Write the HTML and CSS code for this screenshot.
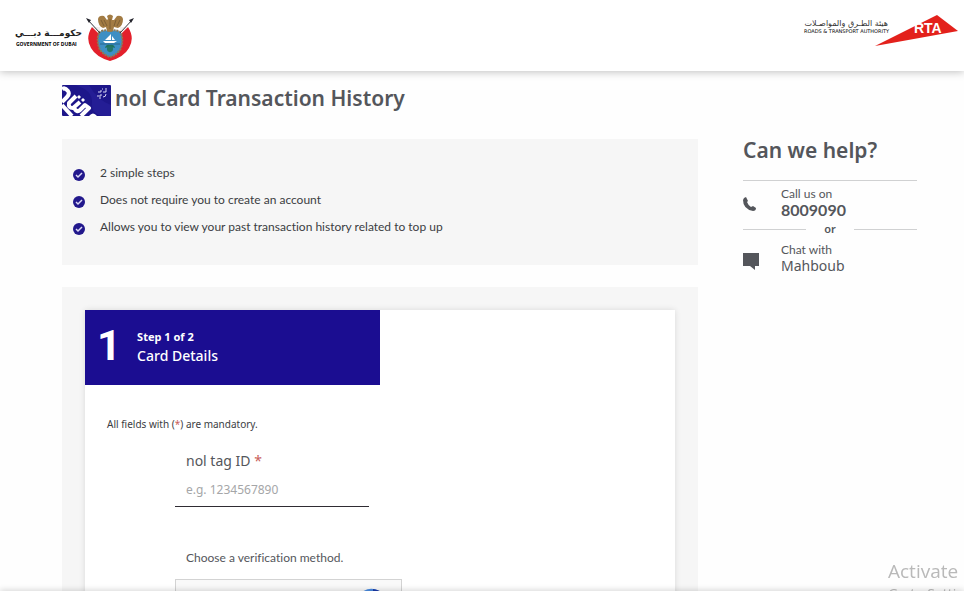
FILE: index.html
```html
<!DOCTYPE html>
<html lang="en">
<head>
    <meta charset="UTF-8">
    <meta name="viewport" content="width=device-width, initial-scale=1.0">
    <title>nol Card Transaction History</title>
    <link rel="stylesheet" href="styles.css">
</head>
<body>
    <header class="header">
        <a href="#" class="logo gov-logo">
            <span class="logo-text gov-text">
                <span class="gov-ar" lang="ar" dir="rtl">حكومـــة دبـــي</span>
                <span class="gov-en">GOVERNMENT OF DUBAI</span>
            </span>
            <svg class="emblem" width="48" height="48" viewBox="0 0 48 48" aria-hidden="true">
                <path d="M6 13 Q10 14 14 18 L35 18 Q38 14 42 13 Q49 24 43 34 Q38 43 24 47 Q10 43 5 34 Q-1 24 6 13z" fill="#e3202b"/>
                <path d="M6 13 L14 13 L14 21z M42 13 L34 13 L34 21z" fill="#f4f1ef"/>
                <path d="M13 19 Q16 15 24 17 Q32 15 35 19 Q38 28 34 36 Q29 42 24 43 Q18 41 14 36 Q10 27 13 19z" fill="#3d8fc4" stroke="#8c7b58" stroke-width="2" stroke-dasharray="2 1"/>
                <path d="M12 5 Q13 1 18 2 L21 6 L22 5 L21 2 Q24 -1 27 2 L26 6 L28 6 L31 2 Q36 1 37 5 Q37 12 32 14 L28 13 L27 17 L24 18 L21 17 L20 13 L17 14 Q12 12 12 5z" fill="#a27b43"/>
                <path d="M15 6 L18 12 M18 6 L21 12 M34 6 L31 12 M30 6 L28 12 M24 5 V15" stroke="#7d5f35" fill="none"/>
                <path d="M1 5 L14 19 M47 5 L34 19" stroke="#34353d"/>
                <path d="M0 4 L5 6 L3 9z M48 4 L43 6 L45 9z" fill="#24242c"/>
                <path d="M19 26 L25 20 L25 26z M26 22 L29 26 L26 26z M17 27 H31 L28 29 H19z" fill="#fff"/>
                <path d="M14 30 H34" stroke="#26668f"/>
                <path d="M24 31 Q20 30 19 34 Q23 32 24 39 Q25 32 29 34 Q28 30 24 31z" fill="#20735c"/>
                <circle cx="24" cy="35" r="3" fill="#24776a"/>
            </svg>
        </a>
        <a href="#" class="logo rta-logo">
            <span class="logo-text rta-text">
                <span class="rta-ar" lang="ar" dir="rtl">هيئة الطـرق والمواصـلات</span>
                <span class="rta-en">ROADS &amp; TRANSPORT AUTHORITY</span>
            </span>
            <svg class="rta-mark" width="83" height="32" viewBox="0 0 83 32" aria-label="RTA">
                <path d="M0 32 L62 1 L83 17z" fill="#e3211c"/>
                <text x="39" y="19" class="rta-name">RTA</text>
            </svg>
        </a>
    </header>

    <main class="page">
        <h1 class="title">
            <svg class="nol-card" width="49" height="31" viewBox="0 0 49 31" aria-hidden="true">
                <rect width="49" height="31" rx="1" fill="#1d168a"/>
                <path d="M13 0 Q31 5 30 18 T45 31 H49 V20 Q35 15 27 0z" fill="#241d95"/>
                <g fill="none" stroke="#fff" stroke-width="4" stroke-linejoin="round">
                    <path d="M0 4 Q3 2 6 6 Q8 9 5 12 L0 17"/>
                    <path d="M14 11 L7 18 Q6 23 11 23 L18 17"/>
                    <path d="M0 20 L10 31"/>
                    <path d="M12 23 Q15 28 18 25 L23 20 L27 23 L19 31"/>
                </g>
                <path d="M17 10 l2 2 l-2 2 l-2 -2z M21 13 l2 2 l-2 2 l-2 -2z M27 31 q4 -5 8 0z" fill="#fff"/>
                <path d="M36 7 h3 v-2 M41 7 h3 v-4 M35 11 h4 v-2 M41 12 q3 0 3 -3 M37 13 h2 M40 4 h1" stroke="#d7d5f3" fill="none"/>
            </svg>
            nol Card Transaction History
        </h1>

        <div class="columns">
            <div class="content">
                <ul class="benefits">
                    <li>
                        <svg class="check" width="12" height="12" viewBox="0 0 12 12" aria-hidden="true"><circle cx="6" cy="6" r="6"/><path d="M3 6 L5 8 L9 4"/></svg>
                        2 simple steps
                    </li>
                    <li>
                        <svg class="check" width="12" height="12" viewBox="0 0 12 12" aria-hidden="true"><circle cx="6" cy="6" r="6"/><path d="M3 6 L5 8 L9 4"/></svg>
                        Does not require you to create an account
                    </li>
                    <li>
                        <svg class="check" width="12" height="12" viewBox="0 0 12 12" aria-hidden="true"><circle cx="6" cy="6" r="6"/><path d="M3 6 L5 8 L9 4"/></svg>
                        Allows you to view your past transaction history related to top up
                    </li>
                </ul>

                <section class="form-wrap">
                    <form class="form-card">
                        <div class="step">
                            <span class="step-number">1</span>
                            <div>
                                <p class="step-count">Step 1 of 2</p>
                                <h2 class="step-name">Card Details</h2>
                            </div>
                        </div>
                        <p class="mandatory">All fields with (<span class="required">*</span>) are mandatory.</p>
                        <div class="fields">
                            <label class="tag-label" for="tagId">nol tag ID <span class="required">*</span></label>
                            <input class="tag-input" type="text" id="tagId" placeholder="e.g. 1234567890">
                            <p class="verify">Choose a verification method.</p>
                            <div class="captcha">
                                <svg width="32" height="32" viewBox="0 0 32 32" aria-hidden="true">
                                    <path d="M5 4 Q15 -3 25 5 L20 10 Q16 6 11 8z" fill="#4a8ce2"/>
                                    <path d="M16 1 Q25 2 29 9 V3 V16 H18 L22 11 Q20 8 16 7z" fill="#1c3aa9"/>
                                </svg>
                            </div>
                        </div>
                    </form>
                </section>
            </div>

            <aside class="help">
                <h2 class="help-title">Can we help?</h2>
                <a href="tel:8009090" class="contact">
                    <span class="contact-icon">
                        <svg width="14" height="14" viewBox="0 0 14 14" aria-hidden="true"><path d="M1 1 L3 0 L5 4 L4 5 Q5 8 8 10 L10 9 L13 11 Q13 14 10 14 Q0 12 0 3z"/></svg>
                    </span>
                    <span class="contact-text"><span>Call us on</span><strong class="phone">8009090</strong></span>
                </a>
                <div class="or">or</div>
                <a href="#" class="contact">
                    <span class="contact-icon">
                        <svg width="16" height="17" viewBox="0 0 16 17" aria-hidden="true"><path d="M0 0 H16 V13 H12 V17 L7 13 H0z"/></svg>
                    </span>
                    <span class="contact-text"><span>Chat with</span><span class="agent">Mahboub</span></span>
                </a>
            </aside>
        </div>
    </main>

    <div class="watermark">
        <p class="watermark-title">Activate</p>
        <p class="watermark-text">Go to Setti</p>
    </div>
    <div class="bottom-bar"></div>
</body>
</html>
```

FILE: styles.css
```css
* { margin: 0; padding: 0; box-sizing: border-box; }
body {
    font-family: "Noto Sans", "Open Sans", sans-serif;
    font-size: 12px;
    line-height: 16px;
    font-variant-ligatures: no-common-ligatures;
    color: #3b3d42;
    background: #fefefe;
    height: 100vh;
    overflow: hidden;
}
a { color: inherit; text-decoration: none; }

/* header */
.header {
    display: flex;
    justify-content: space-between;
    align-items: flex-start;
    height: 71px;
    padding: 14px 6px 0 16px;
    background: #fff;
    box-shadow: 0 1px 8px rgba(0,0,0,0.25);
}
.logo { display: flex; }
.logo-text {
    display: flex;
    flex-direction: column;
    white-space: nowrap;
}
.gov-logo { gap: 4px; }
.gov-text {
    width: 66px;
    padding-top: 12px;
    color: #222;
}
.gov-ar {
    font-family: "DejaVu Sans", sans-serif;
    font-size: 9px;
    font-weight: bold;
    line-height: 14px;
}
.gov-en {
    font-family: "Open Sans", sans-serif;
    font-size: 5px;
    font-weight: bold;
    line-height: 8px;
    color: #000;
}
.rta-text {
    width: 84px;
    padding-top: 6px;
    margin-right: -13px;
    color: #333;
}
.rta-ar {
    font-family: "DejaVu Sans", sans-serif;
    font-size: 8px;
    line-height: 8px;
}
.rta-en {
    font-family: "DejaVu Sans", sans-serif;
    font-size: 5px;
    line-height: 6px;
    color: #000;
}
.rta-name {
    font-family: "Liberation Sans", sans-serif;
    font-size: 14px;
    font-weight: bold;
    fill: #fff;
}

/* page */
.page { padding: 14px 47px 0 62px; }
.title {
    display: flex;
    gap: 4px;
    font-size: 21px;
    font-weight: 600;
    line-height: 26px;
    color: #54565b;
}
.columns {
    display: flex;
    gap: 45px;
    padding-top: 23px;
}
.content { flex: 1; }

.benefits {
    display: flex;
    flex-direction: column;
    gap: 11px;
    height: 126px;
    padding: 26px 11px;
    background: #f6f6f6;
    list-style: none;
    margin-bottom: 22px;
}
.benefits li {
    display: flex;
    align-items: flex-end;
    gap: 15px;
    font-family: Lato, sans-serif;
}
.check { fill: #22188c; }
.check path {
    fill: none;
    stroke: #dcd9f5;
    stroke-width: 1.5;
}

/* form */
.form-wrap {
    padding: 23px;
    background: #f6f6f6;
}
.form-card {
    background: #fff;
    box-shadow: 0 0 6px rgba(0,0,0,0.12);
    min-height: 400px;
}
.step {
    display: flex;
    align-items: center;
    gap: 16px;
    width: 50%;
    height: 75px;
    padding: 0 12px;
    background: #1b0d91;
    color: #fff;
}
.step-number {
    padding-bottom: 4px;
    font-family: Roboto, sans-serif;
    font-size: 42px;
    font-weight: bold;
    line-height: 48px;
}
.step-count {
    font-size: 11px;
    font-weight: bold;
}
.step-name {
    font-size: 14px;
    font-weight: 500;
    line-height: 22px;
}
.mandatory {
    padding: 31px 22px 0;
    font-size: 10px;
}
.required { color: #c9605a; }
.fields {
    display: flex;
    flex-direction: column;
    align-items: flex-start;
    padding: 18px 90px 0;
}
.tag-label {
    padding-left: 11px;
    font-size: 14px;
    line-height: 22px;
    color: #54565b;
}
.tag-input {
    width: 194px;
    height: 35px;
    padding: 0 11px;
    border: none;
    border-bottom: 1px solid #2f2c33;
    background: none;
    font: inherit;
    outline: none;
}
.tag-input::placeholder { color: #a5a6a8; }
.verify {
    padding: 43px 11px 13px;
    font-family: Lato, sans-serif;
    color: #54565b;
}
.captcha {
    display: flex;
    justify-content: flex-end;
    width: 227px;
    height: 76px;
    padding: 8px 12px;
    border: 1px solid #d3d3d3;
    background: #f9f9f9;
}

/* help */
.help {
    width: 174px;
    color: #54565b;
}
.help-title {
    padding-bottom: 19px;
    font-size: 21px;
    font-weight: 600;
    line-height: 22px;
    border-bottom: 1px solid #d0d1d2;
}
.contact {
    display: flex;
    padding-top: 5px;
}
.contact-icon {
    width: 38px;
    padding-top: 11px;
    fill: #54565b;
}
.contact-text {
    display: flex;
    flex-direction: column;
    font-family: Lato, sans-serif;
}
.phone {
    font-size: 16px;
    font-weight: bold;
}
.agent {
    font-family: "Noto Sans", sans-serif;
    font-size: 14px;
}
.or {
    display: flex;
    align-items: center;
    justify-content: space-between;
    padding-top: 3px;
    font-size: 11px;
    font-weight: 600;
}
.or::before, .or::after {
    content: "";
    width: 63px;
    height: 1px;
    background: #d0d1d2;
}

/* overlays */
.watermark {
    position: fixed;
    right: 0;
    bottom: -13px;
    width: 76px;
    overflow: hidden;
    white-space: nowrap;
    font-family: "Open Sans", sans-serif;
    color: #b9b9b9;
}
.watermark-title {
    font-size: 19px;
    line-height: 26px;
}
.watermark-text {
    font-size: 14px;
    line-height: 20px;
}
.bottom-bar {
    position: fixed;
    left: 0;
    right: 0;
    bottom: -4px;
    height: 4px;
    box-shadow: 0 0 6px rgba(0,0,0,0.25);
}
```
